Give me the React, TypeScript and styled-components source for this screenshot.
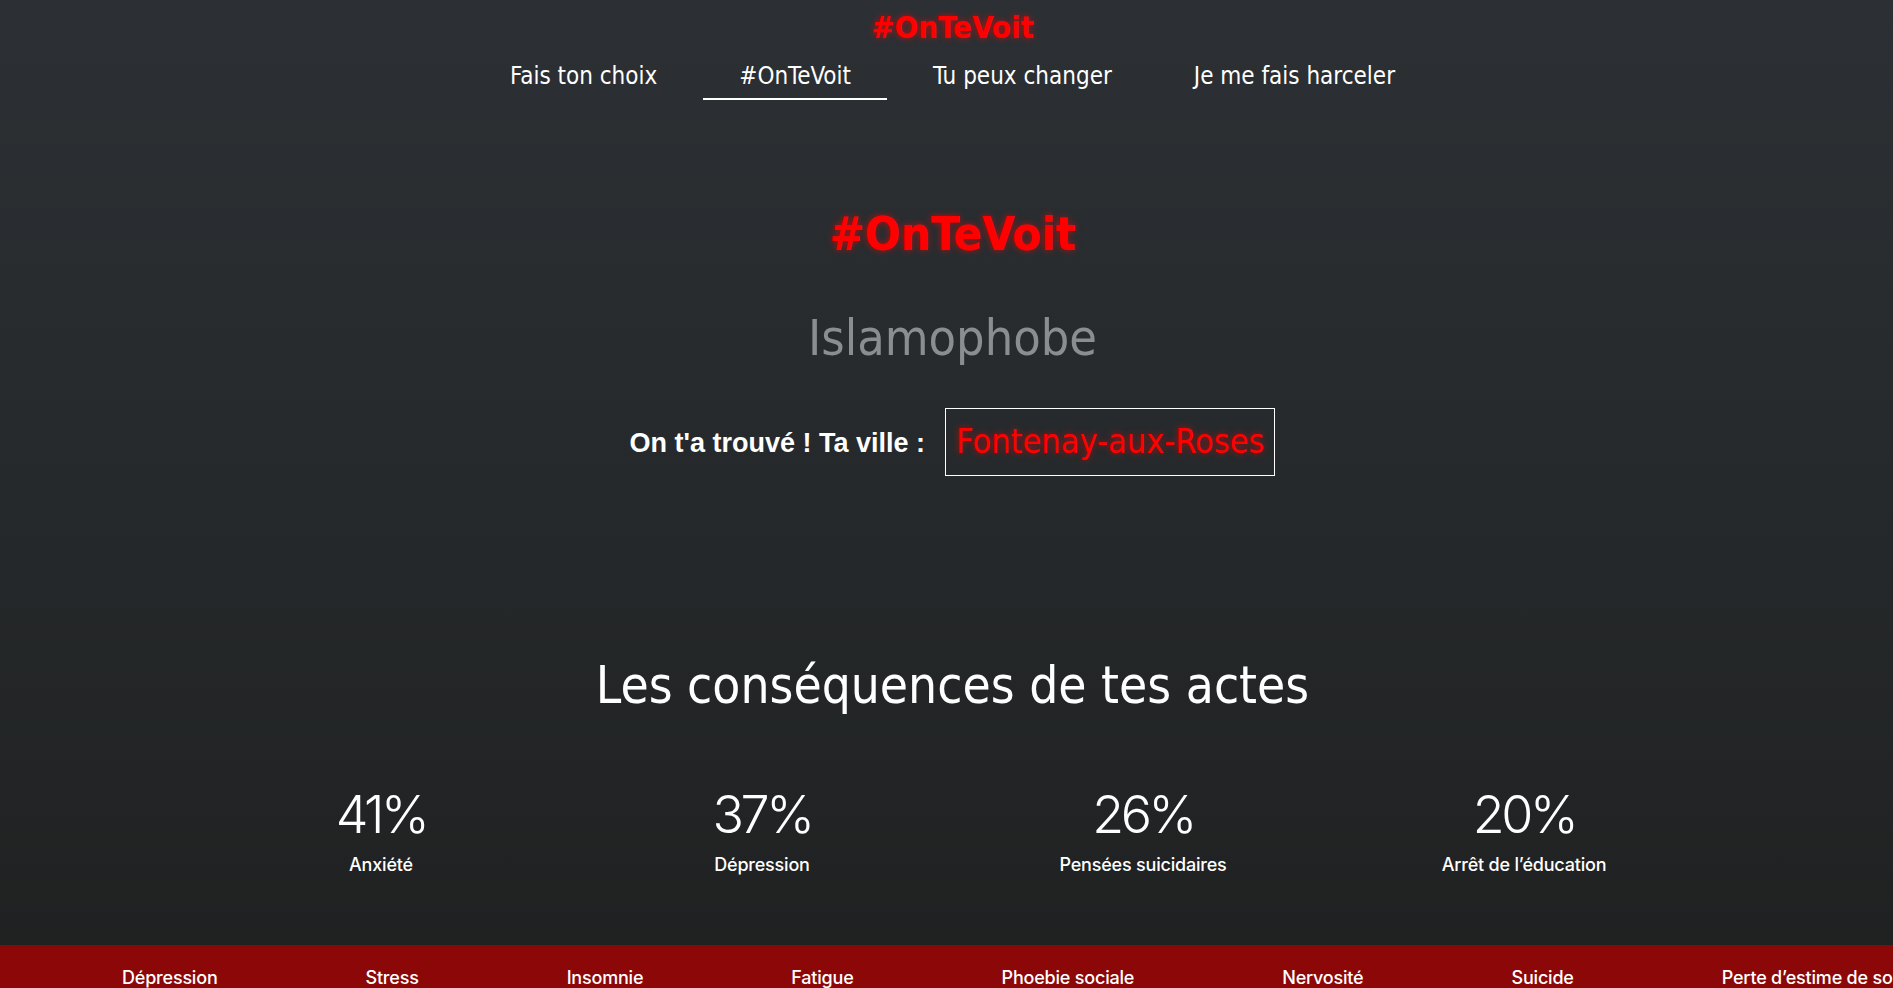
import styled, { createGlobalStyle } from 'styled-components';

const GlobalStyle = createGlobalStyle`
    html, body {
        margin: 0;
        padding: 0;
        overflow: hidden;
        background: #202121;
    }
`;

const display = `"DejaVu Sans Condensed", "DejaVu Sans", "Liberation Sans", sans-serif`;
const body = `Inter, "Liberation Sans", sans-serif`;

const Page = styled.div`
    min-height: 100vh;
    display: flex;
    flex-direction: column;
    align-items: center;
    padding-left: 12px;
    background: linear-gradient(180deg, #2c3034 0%, #25282a 55%, #1f2020 100%);
    color: #fff;
    font-family: ${display};
`;

const Header = styled.header`
    display: flex;
    flex-direction: column;
    align-items: center;
    padding-top: 10px;
`;

const Glow = styled.h1<{ $size: number; $line: number }>`
    margin: 0;
    font-size: ${(p) => p.$size}px;
    line-height: ${(p) => p.$line}px;
    font-weight: 700;
    color: #ff0000;
    text-shadow: 0 0 6px rgba(255, 0, 0, 0.65);
`;

const Nav = styled.nav`
    display: flex;
    gap: 10px;
    margin-top: 18px;
`;

const NavItem = styled.a<{ $active?: boolean }>`
    padding: 0 36px 8px;
    font-size: 24px;
    line-height: 28px;
    color: #fff;
    text-decoration: none;
    border-bottom: 2px solid ${(p) => (p.$active ? '#fff' : 'transparent')};
`;

const Hero = styled.section`
    display: flex;
    flex-direction: column;
    align-items: center;
    margin-top: 108px;
`;

const Insult = styled.h2`
    margin: 51px 0 0;
    font-size: 50px;
    line-height: 54px;
    font-weight: 400;
    color: #8b8e90;
`;

const CityRow = styled.div`
    display: flex;
    align-items: center;
    gap: 20px;
    margin-top: 43px;
`;

const CityLabel = styled.span`
    margin-top: 2px;
    font-family: "Liberation Sans", Arial, sans-serif;
    font-weight: 700;
    font-size: 27px;
    color: #fff;
`;

const CityBox = styled.div`
    border: 1px solid #fff;
    padding: 16px 10px 17px;
    font-size: 34px;
    line-height: 33px;
    color: #ff0000;
    text-shadow: 0 0 6px rgba(255, 0, 0, 0.65);
`;

const Heading = styled.h2`
    margin: 182px 0 0;
    font-size: 51px;
    line-height: 56px;
    font-weight: 400;
    color: #fff;
`;

const Stats = styled.div`
    display: grid;
    grid-template-columns: repeat(4, 381px);
    margin-top: 73px;
`;

const Stat = styled.div`
    display: flex;
    flex-direction: column;
    align-items: center;
    font-family: ${body};
`;

const Value = styled.span`
    font-size: 52px;
    line-height: 55px;
    font-weight: 300;
    letter-spacing: -3.5px;
`;

const Label = styled.span`
    margin-top: 12px;
    font-size: 18px;
    line-height: 22px;
    font-weight: 500;
    letter-spacing: -0.2px;
`;

const Band = styled.footer`
    align-self: stretch;
    margin: 69px 0 0 -12px;
    display: flex;
    gap: 148px;
    padding: 22px 0 20px 122px;
    background: #8c0808;
    font-family: ${body};
    font-size: 18px;
    line-height: 22px;
    font-weight: 500;
    letter-spacing: -0.2px;
    white-space: nowrap;
    overflow: hidden;
`;

const stats = [
    { value: '41%', label: 'Anxiété' },
    { value: '37%', label: 'Dépression' },
    { value: '26%', label: 'Pensées suicidaires' },
    { value: '20%', label: 'Arrêt de l’éducation' },
];

const effects = ['Dépression', 'Stress', 'Insomnie', 'Fatigue', 'Phoebie sociale', 'Nervosité', 'Suicide', 'Perte d’estime de soi', 'Isolement'];

export default function App() {
    return (
        <>
            <GlobalStyle />
            <Page>
                <Header>
                    <Glow $size={31} $line={34}>#OnTeVoit</Glow>
                    <Nav>
                        <NavItem href="#">Fais ton choix</NavItem>
                        <NavItem href="#" $active>#OnTeVoit</NavItem>
                        <NavItem href="#">Tu peux changer</NavItem>
                        <NavItem href="#">Je me fais harceler</NavItem>
                    </Nav>
                </Header>
                <Hero>
                    <Glow $size={47} $line={52}>#OnTeVoit</Glow>
                    <Insult>Islamophobe</Insult>
                    <CityRow>
                        <CityLabel>On t'a trouvé ! Ta ville :</CityLabel>
                        <CityBox>Fontenay-aux-Roses</CityBox>
                    </CityRow>
                    <Heading>Les conséquences de tes actes</Heading>
                    <Stats>
                        {stats.map((s) => (
                            <Stat key={s.label}>
                                <Value>{s.value}</Value>
                                <Label>{s.label}</Label>
                            </Stat>
                        ))}
                    </Stats>
                </Hero>
                <Band>
                    {effects.map((e) => (
                        <span key={e}>{e}</span>
                    ))}
                </Band>
            </Page>
        </>
    );
}
